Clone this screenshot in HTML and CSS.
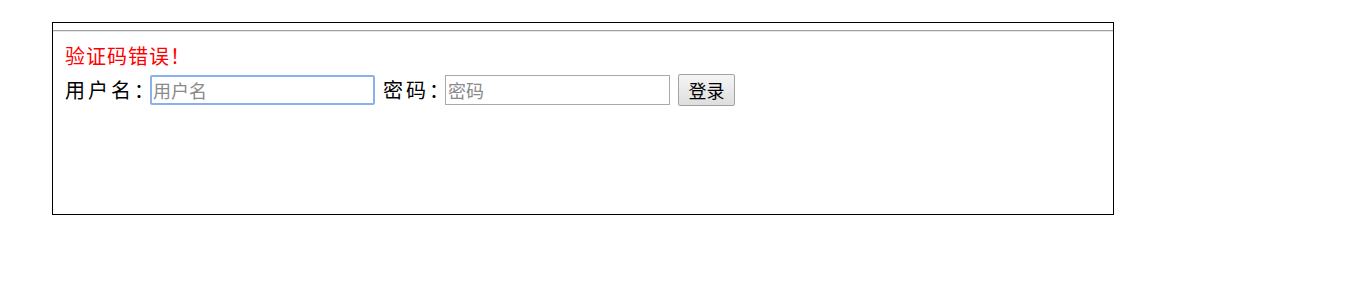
FILE: index.html
```html
<!DOCTYPE html>
<html>
<head>
<meta charset="utf-8">
<link rel="stylesheet" href="styles.css">
</head>
<body>
<div class="box">
  <hr class="rule">
  <div class="content">
    <div class="error">验证码错误！</div>
    <form class="login">
      <label class="lbl">用户名：</label>
      <input class="field focus" type="text" placeholder="用户名">
      <label class="lbl">密码：</label>
      <input class="field" type="password" placeholder="密码">
      <button class="btn" type="button">登录</button>
    </form>
  </div>
</div>
</body>
</html>
```
FILE: styles.css
```css
html, body {
  margin: 0;
  padding: 0;
  background: #fff;
}
body {
  font-family: "Noto Sans CJK SC", "Noto Sans", sans-serif;
  font-size: 18px;
  color: #000;
}
.box {
  margin: 22px 0 0 52px;
  width: 1062px;
  height: 193px;
  box-sizing: border-box;
  border: 1px solid #000;
}
.rule {
  margin: 7px 0 0 0;
  border: 0;
  border-top: 1px solid #a0a0a0;
  border-bottom: 1px solid #e6e6e6;
  height: 0;
}
.content {
  padding: 12px 0 0 12px;
}
.error {
  color: #ff0000;
  font-size: 20px;
  letter-spacing: 1px;
  line-height: 24px;
  height: 24px;
}
.login {
  display: flex;
  align-items: center;
  margin: 6px 0 0 0;
  height: 32px;
}
.lbl {
  font-size: 20px;
  letter-spacing: 3px;
  line-height: 24px;
  margin-right: -7px;
}
.field {
  width: 225px;
  height: 30px;
  box-sizing: border-box;
  border: 1px solid #a9a9a9;
  padding: 0 2px;
  font-family: inherit;
  font-size: 18px;
  margin-right: 8px;
  outline: none;
}
.field::placeholder {
  color: #8a8a8a;
}
.field.focus {
  border: 2px solid #8cb0ee;
  border-radius: 2px;
  padding-left: 1px;
  caret-color: #000;
}
.btn {
  width: 57px;
  height: 32px;
  font-family: inherit;
  font-size: 18px;
  border: 1px solid #a3a3a3;
  border-radius: 2px;
  background: linear-gradient(#f5f5f5, #dedede);
  padding: 0;
  color: #000;
}
```
